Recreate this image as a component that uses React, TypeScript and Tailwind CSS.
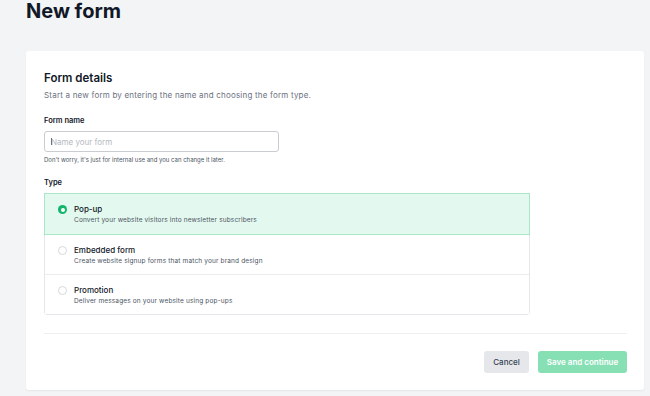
import { useState } from 'react'

const types = [
  { id: 'popup', title: 'Pop-up', desc: 'Convert your website visitors into newsletter subscribers' },
  { id: 'embedded', title: 'Embedded form', desc: 'Create website signup forms that match your brand design' },
  { id: 'promotion', title: 'Promotion', desc: 'Deliver messages on your website using pop-ups' },
]

export default function App() {
  const [selected, setSelected] = useState('popup')
  const [name, setName] = useState('')

  return (
    <div className="min-h-screen bg-[#f3f4f6] px-[26px] font-['Inter',sans-serif] text-[#111827]">
      <h1 className="text-[20px] leading-[22px] font-bold">New form</h1>

      <div className="mt-[29px] w-[618px] rounded-[3px] bg-white pt-[20px] pr-[17px] pb-[17px] pl-[18px] shadow-[0_1px_2px_rgba(0,0,0,0.06)]">
        <h2 className="text-[11.5px] leading-[14px] font-semibold">Form details</h2>
        <p className="mt-[5px] text-[8px] leading-[10px] tracking-[0.2px] text-[#6b7280]">
          Start a new form by entering the name and choosing the form type.
        </p>

        <label className="mt-[16px] block text-[7.5px] leading-[10px] font-semibold">Form name</label>
        <div className="relative mt-[5px] w-[235px]">
          <input
            value={name}
            onChange={(e) => setName(e.target.value)}
            placeholder="Name your form"
            className="block h-[21px] w-full rounded-[3px] border border-[#c9ccd1] px-[6px] text-[8px] text-[#111827] outline-none placeholder:text-[#b5b9c0]"
          />
          {!name && <span className="absolute top-[7px] left-[6.5px] h-[7px] w-px bg-[#6b7280]" />}
        </div>
        <p className="mt-[4px] text-[6px] leading-[8px] text-[#4b5563]">
          Don't worry, it's just for internal use and you can change it later.
        </p>

        <div className="mt-[14px] text-[7.5px] leading-[10px] font-semibold">Type</div>
        <div className="mt-[5px] w-[486px] rounded-[3px] border border-[#e5e7eb]">
          {types.map((t, i) => {
            const on = selected === t.id
            return (
              <button
                key={t.id}
                onClick={() => setSelected(t.id)}
                className={
                  'flex h-[40px] w-full items-start gap-[7px] px-[13px] pt-[10px] text-left ' +
                  (i > 0 ? 'border-t border-[#ececec] ' : '') +
                  (on ? 'bg-[#e3f8ee] outline outline-1 outline-[#a8e8c8]' : 'bg-white')
                }
              >
                <span
                  className={
                    'mt-[1px] flex h-[9px] w-[9px] shrink-0 items-center justify-center rounded-full ' +
                    (on ? 'bg-[#10b76b]' : 'border border-[#d6d8dc] bg-white')
                  }
                >
                  {on && <span className="h-[4px] w-[4px] rounded-full bg-white" />}
                </span>
                <span className="flex flex-col">
                  <span className="text-[8px] leading-[10px] font-medium text-[#111827]">{t.title}</span>
                  <span className="mt-[2px] text-[6.5px] leading-[8px] tracking-[0.15px] text-[#4b5563]">{t.desc}</span>
                </span>
              </button>
            )
          })}
        </div>

        <div className="mt-[18px] h-px w-full bg-[#eeeff1]" />

        <div className="mt-[17px] flex justify-end gap-[9px]">
          <button className="h-[22px] w-[45px] rounded-[3px] bg-[#e5e7eb] text-[8px] font-medium text-[#374151]">
            Cancel
          </button>
          <button className="h-[22px] w-[89px] rounded-[3px] bg-[#86e0b4] text-[8px] font-semibold text-white">
            Save and continue
          </button>
        </div>
      </div>
    </div>
  )
}
